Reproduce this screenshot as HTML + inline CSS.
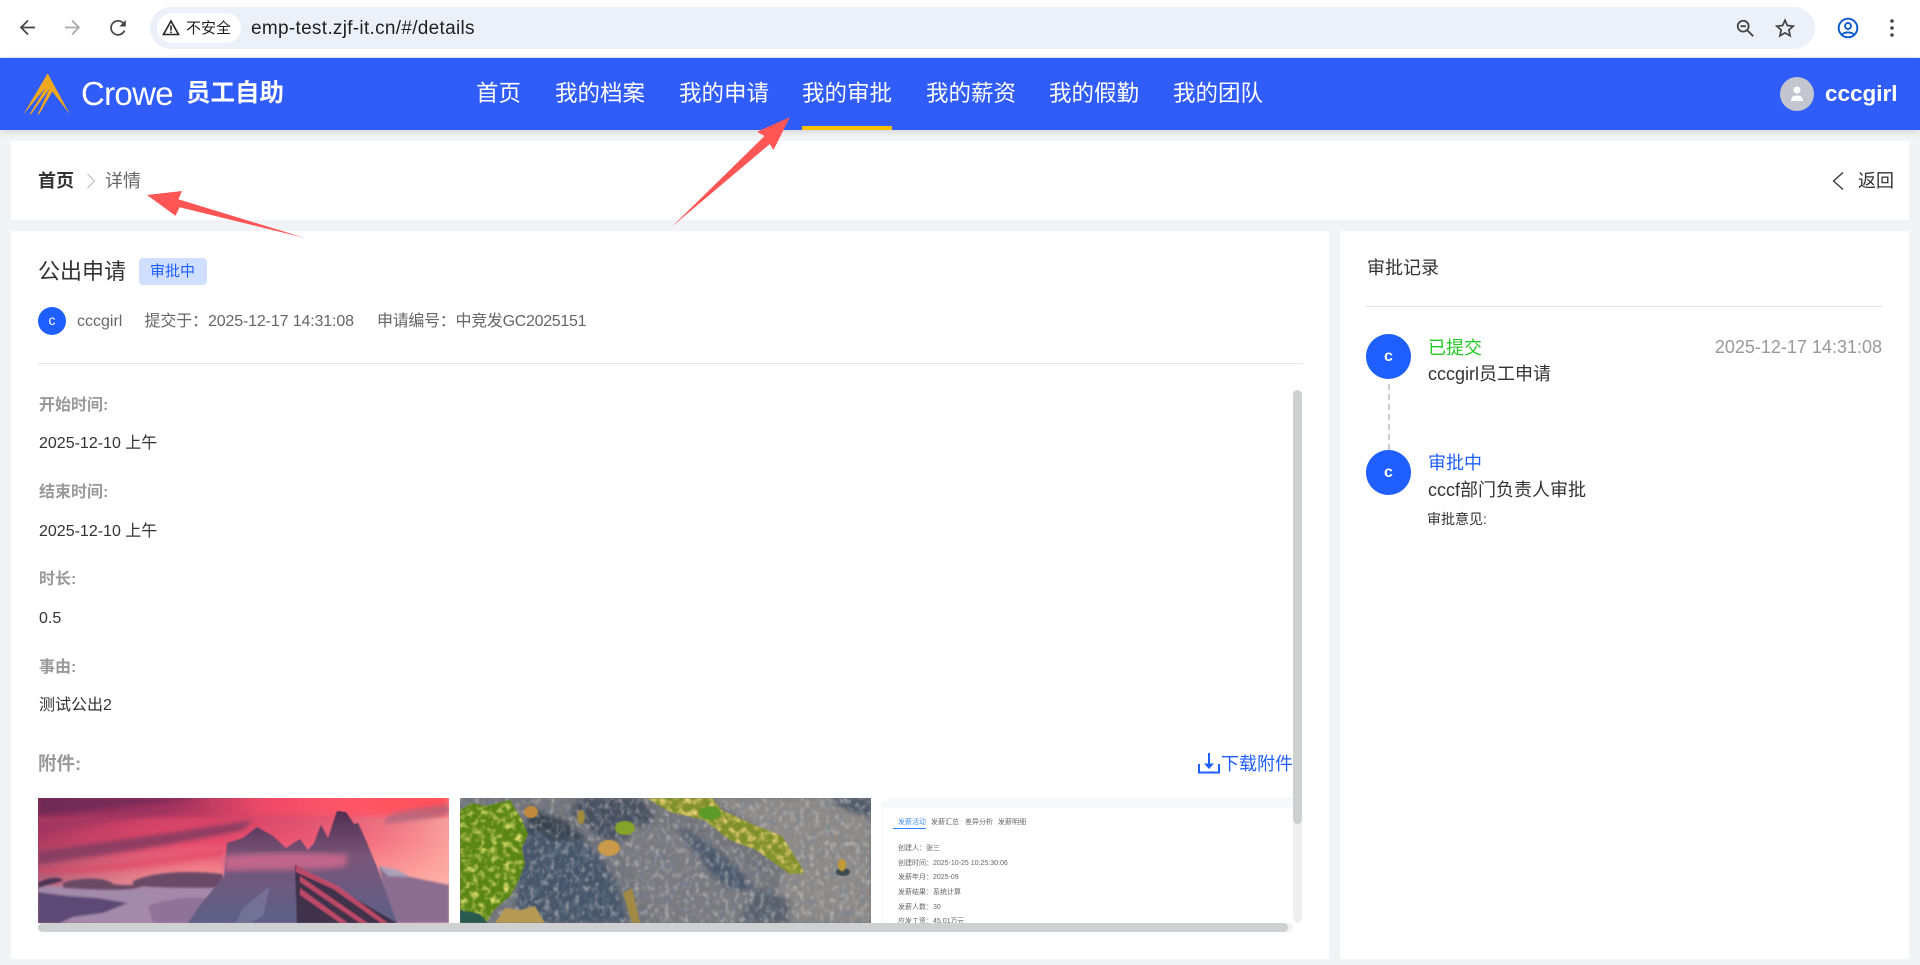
<!DOCTYPE html>
<html lang="zh-CN">
<head>
<meta charset="utf-8">
<title>emp-test.zjf-it.cn/#/details</title>
<style>
html,body{margin:0;padding:0;width:1920px;height:965px;overflow:hidden;background:#f2f3f7;font-family:"Liberation Sans","Noto Sans CJK SC",sans-serif;}
.a{position:absolute;}
.t{position:absolute;white-space:nowrap;line-height:30px;height:30px;}
.nav{color:#fff;font-size:22.5px;top:79px;}
.lb{color:#999;font-size:16px;font-weight:bold;left:39px;}
.val{color:#333;font-size:16px;left:39px;}
.mt{color:#666;font-size:16px;top:307px;}
.mini{color:#666;font-size:7px;line-height:10px;height:10px;filter:blur(.35px);}
.r18{font-size:18px;left:1428px;color:#333;}
svg{position:absolute;display:block;}
</style>
</head>
<body>
<!-- browser bar -->
<div class="a" style="left:0;top:0;width:1920px;height:57px;background:#fff;"></div>
<div class="a" style="left:150px;top:7px;width:1665px;height:42px;border-radius:21px;background:#ecf1f9;"></div>
<div class="a" style="left:157px;top:13px;width:84px;height:30px;border-radius:15px;background:#fff;"></div>
<svg style="left:0;top:0" width="150" height="57" viewBox="0 0 150 57" fill="none" stroke-width="1.700">
<path d="M35 27.500H21.500M28 20.500 21 27.500l7 7" stroke="#444"/>
<path d="M65 27.500H78.500M72 20.500l7 7-7 7" stroke="#aaa"/>
<path d="M124.500 30.500A7 7 0 1 1 122.800 22.700L125 25" stroke="#444"/>
<path d="M125.800 20v6.500h-6.500z" fill="#444"/>
</svg>
<svg style="left:162px;top:19px" width="18" height="17" viewBox="0 0 18 17" fill="none" stroke="#222" stroke-width="1.600"><path d="M9 2 16.500 15.500h-15z"/><path d="M9 6.500v5M9 12.500v1.500"/></svg>
<div class="t" style="left:186px;top:14px;font-size:15px;color:#1f1f1f;">不安全</div>
<div class="t" style="left:251px;top:14px;font-size:19px;color:#1f1f1f;letter-spacing:.3px;">emp-test.zjf-it.cn/#/details</div>
<svg style="left:1735px;top:18px" width="20" height="20" viewBox="0 0 22 22" fill="none" stroke="#444" stroke-width="2"><circle cx="9" cy="9" r="6"/><path d="M6 9h6M13.500 13.500 20 20"/></svg>
<svg style="left:1775px;top:18px" width="20" height="20" viewBox="0 0 22 22" fill="none" stroke="#444" stroke-width="1.900"><path d="M11 2.500 13.600 8.300 20 9l-4.800 4.200 1.400 6.300L11 16.300 5.400 19.500l1.400-6.300L2 9l6.400-.7z"/></svg>
<svg style="left:1837px;top:17px" width="22" height="22" viewBox="0 0 22 22" fill="none" stroke="#0b57d0" stroke-width="1.900"><circle cx="11" cy="11" r="9.300"/><circle cx="11" cy="9" r="3"/><path d="M4.800 17.500c3-2.800 9.400-2.800 12.400 0"/></svg>
<svg style="left:1888px;top:17px" width="8" height="22" viewBox="0 0 8 22" fill="#444"><circle cx="4" cy="4" r="1.800"/><circle cx="4" cy="11" r="1.800"/><circle cx="4" cy="18" r="1.800"/></svg>

<!-- header -->
<div class="a" style="left:0;top:57px;width:1920px;height:73px;background:#305cfa;box-shadow:0 2px 6px rgba(0,0,0,.12);border-top:1px solid #dfe6fb;box-sizing:border-box;"></div>
<svg style="left:15px;top:65px" width="170" height="60" viewBox="0 0 510 180">
<path d="M98 25 165 148 112 80 72 148 68 148 103 72 48 148 44 148 92 68 25 148z" fill="#f0a91e"/>
</svg>
<div class="t" style="left:81px;top:75px;font-size:33px;line-height:38px;height:38px;color:#fff;font-weight:normal;letter-spacing:-.7px;">Crowe</div>
<div class="t" style="left:186px;top:79px;font-size:24.500px;font-weight:bold;color:#fff;">员工自助</div>
<div class="t nav" style="left:476px;">首页</div>
<div class="t nav" style="left:555px;">我的档案</div>
<div class="t nav" style="left:679px;">我的申请</div>
<div class="t nav" style="left:802px;">我的审批</div>
<div class="t nav" style="left:926px;">我的薪资</div>
<div class="t nav" style="left:1049px;">我的假勤</div>
<div class="t nav" style="left:1173px;">我的团队</div>
<div class="a" style="left:802px;top:126px;width:90px;height:4px;background:#fdc000;"></div>
<div class="a" style="left:1780px;top:77px;width:34px;height:34px;border-radius:50%;background:#c3c6cf;"></div>
<svg style="left:1785px;top:82px" width="24" height="24" viewBox="0 0 24 24" fill="#fff"><circle cx="12" cy="8" r="3.500"/><path d="M6 19c0-4 2.500-5.500 6-5.500s6 1.500 6 5.500z"/></svg>
<div class="t" style="left:1825px;top:79px;font-size:22.500px;font-weight:bold;color:#fff;">cccgirl</div>

<!-- breadcrumb -->
<div class="a" style="left:11px;top:141px;width:1898px;height:79px;background:#fff;"></div>
<div class="t" style="left:38px;top:166px;font-size:18px;font-weight:bold;color:#333;">首页</div>
<svg style="left:85px;top:172px" width="12" height="18" viewBox="0 0 12 18" fill="none" stroke="#bbb" stroke-width="1.100"><path d="M2.500 2 9.500 9l-7 7"/></svg>
<div class="t" style="left:105px;top:166px;font-size:18px;color:#666;">详情</div>
<svg style="left:1831px;top:171px" width="14" height="20" viewBox="0 0 14 20" fill="none" stroke="#333" stroke-width="1.300"><path d="M12 1.500 2.500 10l9.500 8.500"/></svg>
<div class="t" style="left:1858px;top:166px;font-size:18px;color:#333;">返回</div>

<!-- left card -->
<div class="a" style="left:11px;top:231px;width:1318px;height:728px;background:#fff;"></div>
<div class="t" style="left:38px;top:257px;font-size:22px;color:#333;">公出申请</div>
<div class="a" style="left:139px;top:258px;width:68px;height:27px;background:#d0dfff;border-radius:4px;"></div>
<div class="t" style="left:150px;top:257px;font-size:15px;color:#1f5eff;">审批中</div>
<div class="a" style="left:38px;top:307px;width:28px;height:28px;border-radius:50%;background:#1f5eff;color:#fff;font-size:14px;line-height:27px;text-align:center;">c</div>
<div class="t mt" style="left:77px;">cccgirl</div>
<div class="t mt" style="left:144.500px;letter-spacing:-.14px;">提交于：2025-12-17 14:31:08</div>
<div class="t mt" style="left:377px;letter-spacing:-.3px;">申请编号：中竞发GC2025151</div>
<div class="a" style="left:38px;top:363px;width:1265px;height:1px;background:#e2e3ea;"></div>

<div class="t lb" style="top:391px;">开始时间:</div>
<div class="t val" style="top:429px;">2025-12-10 上午</div>
<div class="t lb" style="top:478px;">结束时间:</div>
<div class="t val" style="top:517px;">2025-12-10 上午</div>
<div class="t lb" style="top:565px;">时长:</div>
<div class="t val" style="top:604px;">0.5</div>
<div class="t lb" style="top:653px;">事由:</div>
<div class="t val" style="top:691px;">测试公出2</div>
<div class="t lb" style="top:749px;font-size:18.500px;left:38px;">附件:</div>
<svg style="left:1197px;top:752px" width="24" height="22" viewBox="0 0 24 22" fill="none" stroke="#1f5eff" stroke-width="2"><path d="M2 12v8.500h20V12"/><path d="M12 1v12"/><path d="M7 11.500h10L12 17z" fill="#1f5eff" stroke="none"/></svg>
<div class="t" style="left:1221px;top:749px;font-size:18px;color:#1f5eff;">下载附件</div>

<!-- image 1 -->
<svg style="left:38px;top:798px" width="411" height="125" viewBox="0 0 411 125">
<defs>
<linearGradient id="s1" x1="0" y1="0" x2="0" y2="1"><stop offset="0" stop-color="#c23a62"/><stop offset=".35" stop-color="#e84c6c"/><stop offset=".55" stop-color="#f4808a"/><stop offset=".68" stop-color="#f9a6a4"/><stop offset="1" stop-color="#c99cb0"/></linearGradient>
<linearGradient id="s2" x1="0" y1="0" x2="1" y2="0"><stop offset="0" stop-color="#7a2c58" stop-opacity=".55"/><stop offset=".4" stop-color="#d8406a" stop-opacity=".1"/><stop offset=".75" stop-color="#ff8a90" stop-opacity=".4"/><stop offset="1" stop-color="#ffb5aa" stop-opacity=".8"/></linearGradient>
<linearGradient id="top" x1="0" y1="0" x2="1" y2="0"><stop offset="0" stop-color="#752a56"/><stop offset=".35" stop-color="#a8345f"/><stop offset=".55" stop-color="#ee4a68"/><stop offset=".75" stop-color="#ff5568"/><stop offset="1" stop-color="#ff5058"/></linearGradient>
<linearGradient id="m1" x1="0" y1="0" x2="0" y2="1"><stop offset="0" stop-color="#4e2e52"/><stop offset=".4" stop-color="#7a5578"/><stop offset="1" stop-color="#5d6088"/></linearGradient>
<filter id="b4"><feGaussianBlur stdDeviation="4"/></filter>
<filter id="b2"><feGaussianBlur stdDeviation="2"/></filter>
<filter id="b3"><feGaussianBlur stdDeviation="3"/></filter>
<filter id="b1"><feGaussianBlur stdDeviation="1"/></filter>
<filter id="b0"><feGaussianBlur stdDeviation=".5"/></filter>
</defs>
<rect width="411" height="125" fill="url(#s1)"/>
<rect width="411" height="125" fill="url(#s2)"/>
<rect y="-6" width="411" height="24" fill="url(#top)" filter="url(#b4)"/>
<path d="M0 16C60 10 130 4 170 0H0z" fill="#6d2a56" opacity=".75" filter="url(#b2)"/>
<path d="M0 25C60 15 100 10 140 8L130 16C90 22 40 30 0 38z" fill="#9c3560" opacity=".55" filter="url(#b2)"/>
<path d="M0 54C60 44 130 36 215 22L205 32C130 48 60 58 0 66z" fill="#7e3a60" opacity=".8" filter="url(#b2)"/>
<path d="M0 70C50 72 100 60 185 52L185 58C110 70 50 78 0 74z" fill="#e04060" opacity=".5" filter="url(#b2)"/>
<path d="M350 18C375 8 395 10 411 6V16C390 22 365 24 345 26z" fill="#a8657f" opacity=".7" filter="url(#b2)"/>
<g filter="url(#b1)">
<path d="M0 88C40 88 110 92 185 86V125H0z" fill="#a48aaa"/>
<path d="M95 83C115 74 150 72 185 76V90C150 90 120 90 95 88z" fill="#6b4a66"/>
<path d="M25 85C45 78 70 80 75 86 85 88 98 86 105 88 95 94 60 92 25 90z" fill="#6a4864"/>
<path d="M0 85C12 78 24 79 25 83 15 85 8 88 0 90z" fill="#4c3252"/>
<path d="M0 94 30 98 60 100 90 105 65 115 35 119 22 125H0z" fill="#5c4a76"/>
<path d="M110 108C135 98 165 98 180 102L165 125H115z" fill="#8e7298"/>
<path d="M341 68 372 79 411 87V125H350z" fill="#8b6d90"/>
<path d="M341 68 360 72 372 79 350 78z" fill="#a8a0b6"/>
</g>
<g filter="url(#b0)">
<path d="M150 125 160 110 186 78 189 45 205 40 219 29 235 38 248 50 262 41 270 52 276 45 283 27 290 40 299 13 308 14 316 26 320 25 327 40 339 69 359 125z" fill="url(#m1)"/>
</g>
<path d="M186 58C225 54 280 54 310 57L308 68C280 74 230 70 186 73z" fill="#c9688c" opacity=".9" filter="url(#b3)"/>
<g filter="url(#b0)">
<path d="M257 67 290 85 359 125H259z" fill="#41304c"/>
<path d="M258 68 300 88 350 125H343L295 91 258 74zM262 90 310 125H302L262 97zM262 78 330 125H322L262 84z" fill="#d04f6c" opacity=".85"/>
<path d="M205 110 232 88 225 118 212 125H198z" fill="#8a8fae" opacity=".4"/>
</g>
</svg>

<!-- image 2 -->
<svg style="left:460px;top:798px" width="411" height="125" viewBox="0 0 411 125">
<defs>
<filter id="nl" x="0" y="0" width="100%" height="100%"><feTurbulence type="fractalNoise" baseFrequency=".2 .16" numOctaves="4" seed="4"/><feColorMatrix values="0 0 0 0 .70  0 0 0 0 .66  0 0 0 0 .62  3 0 0 0 -1.500"/></filter>
<filter id="nd" x="0" y="0" width="100%" height="100%"><feTurbulence type="fractalNoise" baseFrequency=".14 .1" numOctaves="3" seed="11"/><feColorMatrix values="0 0 0 0 .17  0 0 0 0 .22  0 0 0 0 .30  0 3 0 0 -1.450"/></filter>
<filter id="ng" x="0" y="0" width="100%" height="100%"><feTurbulence type="fractalNoise" baseFrequency=".16" numOctaves="3" seed="8"/><feColorMatrix values="0 0 0 0 .80  0 0 0 0 .78  0 0 0 0 .16  2.500 0 0 0 -1.150"/></filter>
<filter id="ny" x="0" y="0" width="100%" height="100%"><feTurbulence type="fractalNoise" baseFrequency=".16" numOctaves="3" seed="21"/><feColorMatrix values="0 0 0 0 .88  0 0 0 0 .66  0 0 0 0 .20  2.500 0 0 0 -1.100"/></filter>
<filter id="bl"><feGaussianBlur stdDeviation="3"/></filter>
<filter id="bs"><feGaussianBlur stdDeviation=".6"/></filter>
<clipPath id="shrub"><path d="M0 12 12 5 26 8 50 2 62 22 68 36 62 50 65 66 58 84 50 98 34 112 26 125H0z"/></clipPath>
<clipPath id="grass"><path d="M187 0H252L262 12 292 26 322 38 345 75 330 76 296 52 270 42 244 22 210 14z"/></clipPath>
</defs>
<rect width="411" height="125" fill="#73747a"/>
<g filter="url(#bl)">
<path d="M250 0H411V125H290C330 90 335 60 300 30z" fill="#8d8a88"/>
<path d="M60 30C85 15 105 25 125 45 150 65 160 90 168 125H55z" fill="#47546a"/>
<path d="M70 12C90 14 120 28 125 42L90 40 65 32z" fill="#37424f"/>
<path d="M120 0H180L195 20 170 42 140 40 110 15z" fill="#46505f"/>
<path d="M170 30C215 22 270 40 300 85L275 125H195L165 60z" fill="#7a7a80"/>
<path d="M215 28C250 40 280 70 295 90 270 100 250 80 240 60z" fill="#4c596c"/>
<path d="M295 90 330 100 330 125H280z" fill="#59606c"/>
<path d="M370 0H411V20L380 10z" fill="#4b5667"/>
</g>
<g filter="url(#bs)">
<rect width="411" height="125" filter="url(#nd)" opacity=".55"/>
<rect width="411" height="125" filter="url(#nl)" opacity=".5"/>
</g>
<g filter="url(#bs)">
<g clip-path="url(#shrub)"><rect width="72" height="125" fill="#5a8618"/><rect width="72" height="125" filter="url(#ng)"/></g>
<path d="M0 112 20 116 28 125H0z" fill="#2b5a50"/>
<path d="M35 125 45 110 60 112 75 108 85 125z" fill="#b59a55"/>
<g clip-path="url(#grass)"><rect x="180" width="170" height="80" fill="#80902a"/><rect x="180" width="170" height="80" filter="url(#ny)"/></g>
<ellipse cx="71" cy="14" rx="7" ry="6" fill="#c08a3c"/>
<ellipse cx="121" cy="19" rx="4" ry="7" fill="#a08a3c"/>
<ellipse cx="165" cy="30" rx="10" ry="7" fill="#86a32a"/>
<ellipse cx="149" cy="50" rx="11" ry="8" fill="#c89a4a"/>
<ellipse cx="250" cy="15" rx="11" ry="7" fill="#5c9a2a"/>
<path d="M163 95 172 125H180L172 90z" fill="#a28a44"/>
<ellipse cx="383" cy="74" rx="7" ry="4" fill="#3b4a50"/>
<ellipse cx="382" cy="67" rx="4" ry="6" fill="#c29a35"/>
</g>
</svg>

<!-- image 3 -->
<div class="a" style="left:882px;top:798px;width:411px;height:125px;background:#f7f8fa;overflow:hidden;">
<div class="a" style="left:1px;top:10px;width:410px;height:115px;background:#fff;"></div>
<div class="a" style="left:0;top:0;width:6px;height:4px;background:#fff;"></div>
<div class="t mini" style="left:16px;top:20px;color:#4a90f5;">发薪活动</div>
<div class="t mini" style="left:49px;top:20px;">发薪汇总</div>
<div class="t mini" style="left:83px;top:20px;">差异分析</div>
<div class="t mini" style="left:116px;top:20px;">发薪明细</div>
<div class="a" style="left:11px;top:30px;width:33px;height:1px;background:#2d86ff;"></div>
<div class="t mini" style="left:16px;top:46px;">创建人：张三</div>
<div class="t mini" style="left:16px;top:61px;">创建时间：2025-10-25 10:25:30:06</div>
<div class="t mini" style="left:16px;top:75px;">发薪年月：2025-09</div>
<div class="t mini" style="left:16px;top:90px;">发薪结果：系统计算</div>
<div class="t mini" style="left:16px;top:105px;">发薪人数：30</div>
<div class="t mini" style="left:16px;top:119px;">应发工资：45.01万元</div>
</div>

<!-- scrollbars -->
<div class="a" style="left:1293px;top:390px;width:9px;height:533px;background:#f0f0f0;border-radius:5px;"></div>
<div class="a" style="left:1293px;top:390px;width:9px;height:434px;background:#cfd0d2;border-radius:5px;"></div>
<div class="a" style="left:38px;top:923px;width:1255px;height:9px;background:#f0f0f0;border-radius:5px;"></div>
<div class="a" style="left:38px;top:923px;width:1250px;height:9px;background:#cfd0d2;border-radius:5px;"></div>

<!-- right card -->
<div class="a" style="left:1340px;top:231px;width:569px;height:728px;background:#fff;"></div>
<div class="t" style="left:1367px;top:253px;font-size:18px;color:#333;">审批记录</div>
<div class="a" style="left:1366px;top:306px;width:516px;height:1px;background:#e2e3ea;"></div>
<div class="a" style="left:1366px;top:334px;width:45px;height:45px;border-radius:50%;background:#1f5eff;color:#fff;font-size:16px;font-weight:bold;line-height:45px;text-align:center;">c</div>
<div class="a" style="left:1388px;top:384px;height:66px;width:0;border-left:2px dashed #ccc;"></div>
<div class="t r18" style="top:333px;color:#22cc22;">已提交</div>
<div class="t" style="right:38px;top:332px;font-size:18px;color:#999;">2025-12-17 14:31:08</div>
<div class="t r18" style="top:359px;">cccgirl员工申请</div>
<div class="a" style="left:1366px;top:450px;width:45px;height:45px;border-radius:50%;background:#1f5eff;color:#fff;font-size:16px;font-weight:bold;line-height:45px;text-align:center;">c</div>
<div class="t r18" style="top:448px;color:#1f5eff;">审批中</div>
<div class="t r18" style="top:475px;">cccf部门负责人审批</div>
<div class="t" style="left:1427px;top:504px;font-size:14px;color:#333;">审批意见:</div>

<!-- annotation arrows -->
<svg style="left:0;top:0" width="1920" height="965" viewBox="0 0 1920 965">
<path d="M147 195 182 191 178.400 199.300 305 238 179.600 207.300 175.500 215.700z" fill="#ff5555"/>
<path d="M789.800 117.300 757 131.700 764.500 136 671.800 226.700 769.800 144 773.500 150z" fill="#ff5555"/>
</svg>
</body>
</html>
